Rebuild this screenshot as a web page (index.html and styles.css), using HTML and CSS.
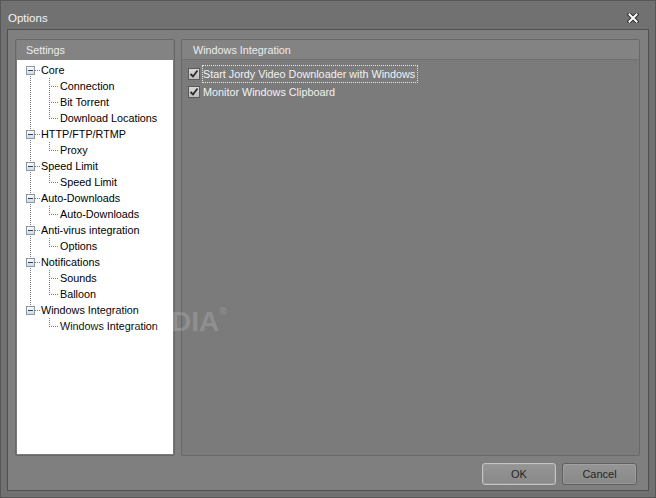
FILE: index.html
```html
<!DOCTYPE html>
<html>
<head>
<meta charset="utf-8">
<title>Options</title>
<link rel="stylesheet" href="styles.css">
</head>
<body>
<svg class="defs" width="0" height="0">
  <defs>
    <linearGradient id="boxfill" x1="0" y1="0" x2="0" y2="1">
      <stop offset="0" stop-color="#ffffff"/>
      <stop offset="1" stop-color="#d6d6d6"/>
    </linearGradient>
    <g id="box">
      <rect x="9.5" y="4.5" width="8" height="8" fill="url(#boxfill)" stroke="#8d9aa6"/>
      <path d="M11 8.5H16" stroke="#24407e" stroke-width="1"/>
      <path class="dot" d="M18 8.5H23"/>
    </g>
  </defs>
</svg>
<div class="window">
  <div class="titlebar">
    <span class="title">Options</span>
    <svg class="close" width="12" height="10" viewBox="0 0 12 10">
      <path d="M2.5 1.5L9.5 8.5M9.5 1.5L2.5 8.5" stroke="#2e2e2e" stroke-width="4" stroke-linecap="square"/>
      <path d="M2.5 1.5L9.5 8.5M9.5 1.5L2.5 8.5" stroke="#ffffff" stroke-width="2" stroke-linecap="square"/>
    </svg>
  </div>
  <div class="client">
    <div class="panels">
      <div class="panel panel-left">
        <div class="panel-head">Settings</div>
        <div class="tree">
          <div class="row"><svg width="24" height="16"><path class="dot" d="M13.5 14V16"/><use href="#box"/></svg><span>Core</span></div>
          <div class="row"><svg width="43" height="16"><path class="dot" d="M13.5 0V16M32.5 0V16M34 8.5H42"/></svg><span>Connection</span></div>
          <div class="row"><svg width="43" height="16"><path class="dot" d="M13.5 0V16M32.5 0V16M34 8.5H42"/></svg><span>Bit Torrent</span></div>
          <div class="row"><svg width="43" height="16"><path class="dot" d="M13.5 0V16M32.5 0V9M34 8.5H42"/></svg><span>Download Locations</span></div>
          <div class="row"><svg width="24" height="16"><path class="dot" d="M13.5 0V4M13.5 14V16"/><use href="#box"/></svg><span>HTTP/FTP/RTMP</span></div>
          <div class="row"><svg width="43" height="16"><path class="dot" d="M13.5 0V16M32.5 0V9M34 8.5H42"/></svg><span>Proxy</span></div>
          <div class="row"><svg width="24" height="16"><path class="dot" d="M13.5 0V4M13.5 14V16"/><use href="#box"/></svg><span>Speed Limit</span></div>
          <div class="row"><svg width="43" height="16"><path class="dot" d="M13.5 0V16M32.5 0V9M34 8.5H42"/></svg><span>Speed Limit</span></div>
          <div class="row"><svg width="24" height="16"><path class="dot" d="M13.5 0V4M13.5 14V16"/><use href="#box"/></svg><span>Auto-Downloads</span></div>
          <div class="row"><svg width="43" height="16"><path class="dot" d="M13.5 0V16M32.5 0V9M34 8.5H42"/></svg><span>Auto-Downloads</span></div>
          <div class="row"><svg width="24" height="16"><path class="dot" d="M13.5 0V4M13.5 14V16"/><use href="#box"/></svg><span>Anti-virus integration</span></div>
          <div class="row"><svg width="43" height="16"><path class="dot" d="M13.5 0V16M32.5 0V9M34 8.5H42"/></svg><span>Options</span></div>
          <div class="row"><svg width="24" height="16"><path class="dot" d="M13.5 0V4M13.5 14V16"/><use href="#box"/></svg><span>Notifications</span></div>
          <div class="row"><svg width="43" height="16"><path class="dot" d="M13.5 0V16M32.5 0V16M34 8.5H42"/></svg><span>Sounds</span></div>
          <div class="row"><svg width="43" height="16"><path class="dot" d="M13.5 0V16M32.5 0V9M34 8.5H42"/></svg><span>Balloon</span></div>
          <div class="row"><svg width="24" height="16"><path class="dot" d="M13.5 0V4"/><use href="#box"/></svg><span>Windows Integration</span></div>
          <div class="row"><svg width="43" height="16"><path class="dot" d="M32.5 0V9M34 8.5H42"/></svg><span>Windows Integration</span></div>
        </div>
      </div>
      <div class="panel panel-right">
        <div class="panel-head head-right">Windows Integration</div>
        <div class="panel-body">
          <div class="check-row">
            <span class="checkbox"><svg width="10" height="10" viewBox="0 0 10 10"><path d="M1.5 5L4 7.5L8.5 1.5" fill="none" stroke="#2a2a2a" stroke-width="1.8"/></svg></span>
            <span class="label focused">Start Jordy Video Downloader with Windows</span>
          </div>
          <div class="check-row">
            <span class="checkbox"><svg width="10" height="10" viewBox="0 0 10 10"><path d="M1.5 5L4 7.5L8.5 1.5" fill="none" stroke="#2a2a2a" stroke-width="1.8"/></svg></span>
            <span class="label">Monitor Windows Clipboard</span>
          </div>
        </div>
      </div>
    </div>
    <div class="buttons">
      <div class="btn btn-default">OK</div>
      <div class="btn btn-cancel">Cancel</div>
    </div>
  </div>
  <div class="watermark">SOFTPEDIA<span class="reg">®</span></div>
</div>
</body>
</html>
```

FILE: styles.css
```css
* { box-sizing: border-box; }
html, body { margin: 0; padding: 0; }
body {
  width: 656px;
  height: 498px;
  overflow: hidden;
  background: #6f6f6f;
  font-family: "Liberation Sans", Arial, sans-serif;
  font-size: 10.8px;
}
.defs { position: absolute; width: 0; height: 0; }
.window {
  position: relative;
  width: 656px;
  height: 498px;
  border: 1px solid #575757;
  background: #717171;
  display: flex;
  flex-direction: column;
}
.titlebar {
  height: 28px;
  flex: none;
  display: flex;
  align-items: center;
  justify-content: space-between;
  padding: 5px 16px 0 7px;
  color: #f4f4f4;
  font-size: 11.5px;
}
.close { display: block; }
.client {
  flex: 1;
  margin: 0 6px 6px 6px;
  border: 1px solid #4f4f4f;
  background: #7f7f7f;
  display: flex;
  flex-direction: column;
  padding: 9px 8px 5px 7px;
}
.panels {
  height: 417px;
  flex: none;
  display: flex;
  gap: 6px;
}
.panel {
  border: 1px solid #686868;
  border-radius: 2px;
  background: #7b7b7b;
  display: flex;
  flex-direction: column;
}
.panel-left { width: 160px; padding: 0 1px 1px 1px; }
.panel-right { width: 459px; }
.panel-head {
  height: 20px;
  flex: none;
  line-height: 20px;
  padding-left: 9px;
  color: #ececec;
  background: #838383;
}
.head-right {
  padding-left: 11px;
  border-bottom: 1px solid #727272;
}
.tree {
  flex: 1;
  background: #ffffff;
  padding-top: 2px;
}
.row {
  height: 16px;
  display: flex;
  align-items: center;
  color: #000;
  white-space: nowrap;
}
.row svg { display: block; flex: none; }
.dot {
  fill: none;
  stroke: #7c7c7c;
  stroke-width: 1;
  stroke-dasharray: 1 1;
  shape-rendering: crispEdges;
}
.panel-body {
  flex: 1;
  padding: 4px 0 0 6px;
}
.check-row {
  height: 19px;
  display: flex;
  align-items: center;
}
.check-row + .check-row { margin-top: -0.5px; }
.checkbox {
  width: 12px;
  height: 12px;
  border: 1px solid #5a5a5a;
  background: linear-gradient(#d8d8d8, #bdbdbd);
  display: flex;
  align-items: center;
  justify-content: center;
  flex: none;
}
.checkbox svg { display: block; }
.label {
  margin-left: 2px;
  height: 18px;
  line-height: 16px;
  padding: 0 2px 0 0;
  border: 1px solid transparent;
  color: #f2f2f2;
  white-space: nowrap;
}
.label.focused { border: 1px dotted #e4e4e4; }
.buttons {
  margin-top: 7px;
  height: 22px;
  display: flex;
  justify-content: flex-end;
  gap: 6px;
  padding-right: 3px;
}
.btn {
  width: 74px;
  height: 22px;
  border: 1px solid #5f5f5f;
  border-radius: 3px;
  background: linear-gradient(#959595, #898989);
  box-shadow: inset 0 0 0 1px rgba(255, 255, 255, 0.12);
  color: #262626;
  font-size: 11px;
  display: flex;
  align-items: center;
  justify-content: center;
}
.btn-default { border-color: #c4c4c4; box-shadow: inset 0 0 0 1px #9a9a9a; }
.btn-cancel { width: 75px; }
.watermark {
  position: absolute;
  left: 58px;
  top: 307px;
  font-family: "Liberation Sans", Arial, sans-serif;
  font-weight: bold;
  font-size: 28px;
  line-height: 28px;
  color: rgba(255, 255, 255, 0.17);
  white-space: nowrap;
  pointer-events: none;
}
.watermark .reg {
  font-size: 10px;
  line-height: 10px;
  vertical-align: top;
  position: relative;
  top: -1px;
  margin-left: 0;
}
```
